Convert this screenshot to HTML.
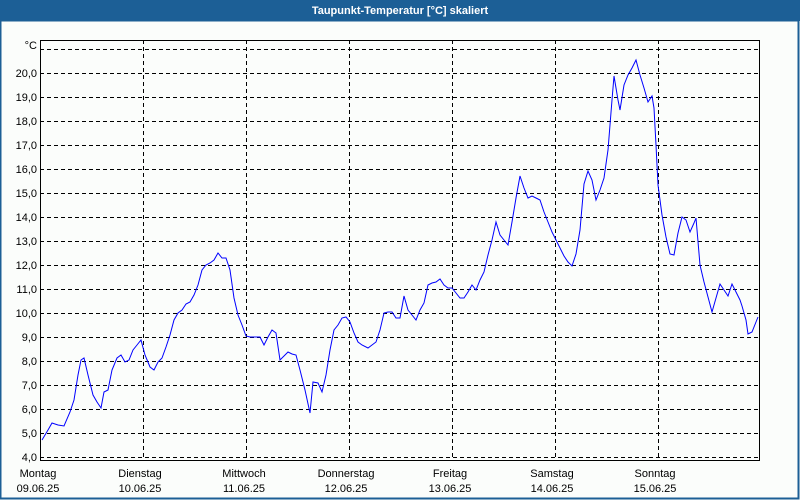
<!DOCTYPE html>
<html><head><meta charset="utf-8"><style>
html,body{margin:0;padding:0;width:800px;height:500px;overflow:hidden;background:#fbfdfb;font-family:"Liberation Sans","DejaVu Sans",sans-serif}
</style></head><body>
<svg width="800" height="500" xmlns="http://www.w3.org/2000/svg" style="display:block">
<rect x="0" y="0" width="800" height="500" fill="#fbfdfb"/>
<rect x="0" y="0" width="800" height="21" fill="#1c5f96"/>
<rect x="0.5" y="20.5" width="798" height="478" fill="none" stroke="#1c5f96" stroke-width="2"/>
<text x="400" y="14" fill="#fff" font-size="11" font-weight="bold" text-anchor="middle">Taupunkt-Temperatur [°C] skaliert</text>
<g stroke="#000" stroke-width="1" stroke-dasharray="4,3" fill="none">
<path d="M40 49.5H760M40 73.5H760M40 97.5H760M40 121.5H760M40 145.5H760M40 169.5H760M40 193.5H760M40 217.5H760M40 241.5H760M40 265.5H760M40 289.5H760M40 313.5H760M40 337.5H760M40 361.5H760M40 385.5H760M40 409.5H760M40 433.5H760M40 457.5H760"/>
<path d="M143.5 40V460M246.5 40V460M349.5 40V460M452.5 40V460M555.5 40V460M658.5 40V460"/>
</g>
<rect x="40.5" y="40.5" width="719" height="420" fill="none" stroke="#000"/>
<g font-size="11" fill="#000" text-anchor="end">
<text x="37" y="49">°C</text>
<text x="37" y="77">20,0</text><text x="37" y="101">19,0</text><text x="37" y="125">18,0</text><text x="37" y="149">17,0</text><text x="37" y="173">16,0</text><text x="37" y="197">15,0</text><text x="37" y="221">14,0</text><text x="37" y="245">13,0</text><text x="37" y="269">12,0</text><text x="37" y="293">11,0</text><text x="37" y="317">10,0</text><text x="37" y="341">9,0</text><text x="37" y="365">8,0</text><text x="37" y="389">7,0</text><text x="37" y="413">6,0</text><text x="37" y="437">5,0</text><text x="37" y="461">4,0</text>
</g>
<g font-size="11" fill="#000" text-anchor="middle">
<text x="38" y="477">Montag</text><text x="38" y="492">09.06.25</text>
<text x="140" y="477">Dienstag</text><text x="140" y="492">10.06.25</text>
<text x="244" y="477">Mittwoch</text><text x="244" y="492">11.06.25</text>
<text x="346" y="477">Donnerstag</text><text x="346" y="492">12.06.25</text>
<text x="450" y="477">Freitag</text><text x="450" y="492">13.06.25</text>
<text x="552" y="477">Samstag</text><text x="552" y="492">14.06.25</text>
<text x="655" y="477">Sonntag</text><text x="655" y="492">15.06.25</text>
</g>
<polyline fill="none" stroke="#0000ff" stroke-width="1" points="42,440 48,430 52,423 58,425 64,426 70,412 74,400 78,375 81,360 84,358 88,375 93,395 97,402 101,408 104,392 108,390 112,370 117,358 121,355 125,362 129,360 133,350 137,345 141,340 145,355 150,367 154,370 158,362 162,358 166,347 170,335 174,320 178,313 182,310 186,304 190,302 194,295 198,285 202,270 206,265 210,263 214,260 218,253 222,258 226,258 230,270 234,298 238,315 242,325 246,336 250,337 256,337 260,337 264,345 268,337 272,330 276,333 280,360 284,356 288,352 292,354 296,355 300,370 305,390 310,413 313,382 318,383 322,392 326,375 330,350 334,330 338,325 342,318 346,317 350,322 354,333 358,342 362,345 368,348 372,345 376,342 380,330 384,313 388,312 392,312 396,318 400,318 404,296 408,310 412,315 416,320 420,310 424,303 428,285 432,283 436,282 440,279 444,285 448,288 452,288 456,293 460,298 464,298 468,292 472,285 476,290 480,280 484,272 488,255 492,240 496,222 500,235 504,240 508,245 512,222 516,198 520,176 524,188 528,198 532,196 536,198 540,200 544,212 548,222 552,232 556,240 560,248 564,256 568,262 572,266 576,254 580,230 584,184 588,171 592,180 596,200 600,190 604,178 608,150 612,100 614,76 618,100 620,110 624,85 628,75 632,68 636,60 640,75 644,88 648,102 652,96 654,108 656,145 658,185 662,215 666,237 670,254 674,255 678,233 682,217 686,220 690,232 694,223 696,218 700,265 704,282 708,297 712,312 716,298 720,284 724,290 728,296 732,284 736,292 740,300 742,306 746,320 748,334 752,332 756,322 758,317"/>
</svg>
</body></html>
